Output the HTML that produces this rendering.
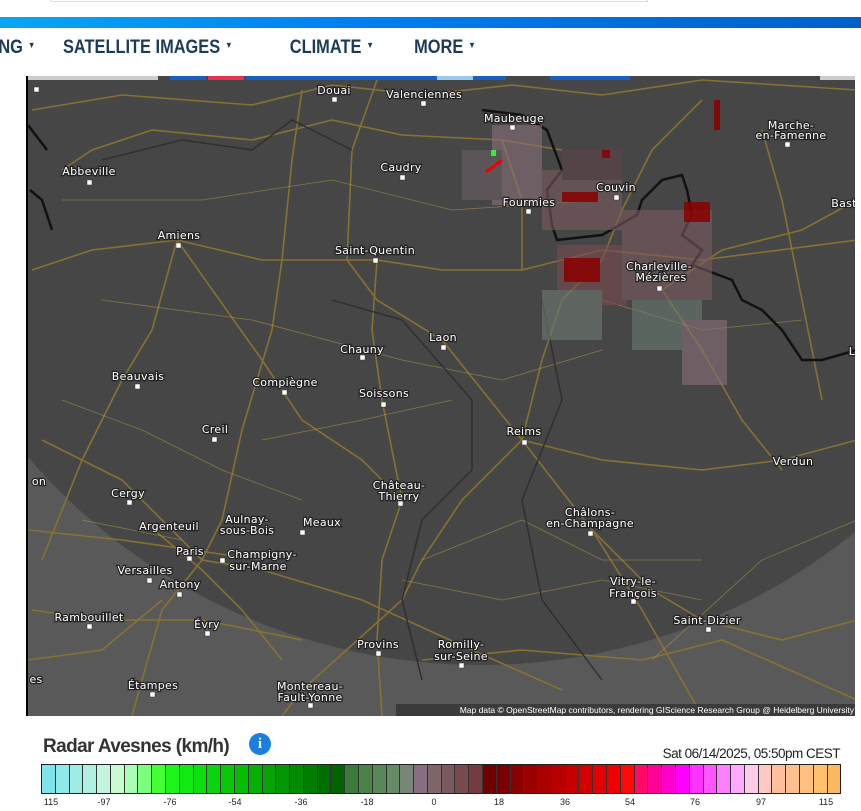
<!DOCTYPE html>
<html><head><meta charset="utf-8"><style>
*{margin:0;padding:0;box-sizing:border-box}
body{width:861px;height:811px;background:#fff;overflow:hidden;position:relative;font-family:"Liberation Sans",sans-serif}
.search{position:absolute;left:50px;top:-2px;width:598px;height:4px;border:1px solid #ddd;border-top:none}
.bar{position:absolute;left:0;top:17px;width:861px;height:11px;background:linear-gradient(90deg,#0aa6f2,#0080f0 40%,#0060c8)}
.nav{position:absolute;top:36px;left:0;height:24px;font-weight:bold;font-size:19.5px;color:#1c3a5a;white-space:nowrap;transform:scaleX(0.84);transform-origin:0 0}
.nav span{position:absolute;top:0}
.nav i{font-style:normal;font-size:9px;vertical-align:5px;margin-left:6px}
.map{position:absolute;left:26px;top:76px;width:829px;height:640px;background:#454545;overflow:hidden;border-left:2px solid #000}
.title{position:absolute;left:43px;top:736px;font-size:19px;font-weight:bold;color:#333;letter-spacing:-0.6px}
.info{position:absolute;left:249px;top:733px;width:22px;height:22px;border-radius:50%;background:#1a7fe0;color:#fff;font:bold 15px "Liberation Serif",serif;text-align:center;line-height:22px}
.date{position:absolute;right:21px;top:746px;font-size:13.5px;color:#222;letter-spacing:-0.5px}
.legend{position:absolute;left:41px;top:764px;width:800px;height:30px;border:1px solid #222;display:flex}
.legend div{flex:1;border-right:1px solid #333}
.lab{position:absolute;top:797px;font-size:9px;color:#222;transform:translateX(-50%)}
</style></head><body>
<div class="search"></div>
<div class="bar"></div>
<div class="nav">
<span style="left:-2px">NG<i>▼</i></span>
<span style="left:75px">SATELLITE IMAGES<i>▼</i></span>
<span style="left:345px">CLIMATE<i>▼</i></span>
<span style="left:493px">MORE<i>▼</i></span>
</div>
<div class="map">
<svg width="829" height="640" viewBox="26 76 829 640" xmlns="http://www.w3.org/2000/svg" font-family="DejaVu Sans, sans-serif" font-size="11">
<rect x="26" y="76" width="829" height="640" fill="#595959"/>
<circle cx="478" cy="70" r="595" fill="#464646"/>
<g fill="none" stroke="#8a7430" stroke-width="1.6" opacity="0.95">
<path d="M30 110 L120 95 L250 105 L330 85 L420 95 L510 85 L600 95 L700 80 L855 90"/>
<path d="M60 170 L90 150 L150 130 L250 140 L330 120 L400 135 L500 140 L560 150"/>
<path d="M30 270 L90 250 L175 240 L260 260 L375 260 L440 270 L520 270 L600 250 L700 260 L855 240"/>
<path d="M175 240 L150 330 L120 380 L80 460 L40 560"/>
<path d="M175 240 L260 360 L300 420 L360 460 L400 500"/>
<path d="M300 90 L290 160 L280 260 L270 330 L240 430 L220 520 L200 560"/>
<path d="M375 80 L350 150 L345 260 L375 300 L440 340 L520 440 L590 530 L640 610 L700 716"/>
<path d="M375 260 L370 330 L380 400 L400 500 L380 560 L375 640 L380 716"/>
<path d="M520 440 L600 460 L700 470 L780 460 L855 440"/>
<path d="M520 440 L460 500 L420 560 L400 600 L300 690 L280 716"/>
<path d="M520 440 L540 360 L560 300 L600 260 L620 210 L650 150 L700 100"/>
<path d="M660 290 L700 350 L740 420 L780 470"/>
<path d="M200 560 L260 570 L360 600 L470 650 L560 690"/>
<path d="M30 610 L100 620 L200 620 L300 640"/>
<path d="M200 560 L160 610 L140 680 L130 716"/>
<path d="M590 530 L650 590 L700 620 L780 640 L855 620"/>
<path d="M40 440 L120 480 L200 560"/>
<path d="M500 140 L520 200 L520 270"/>
<path d="M760 130 L780 200 L800 300 L820 400"/>
<path d="M660 290 L720 250 L800 230 L855 200"/>
<path d="M26 530 L120 540 L190 550 L260 560"/><path d="M140 520 L200 570 L240 610 L280 660"/><path d="M26 660 L100 650 L160 600"/><path d="M420 660 L520 650 L640 660 L720 640 L855 700"/>
</g>
<g fill="none" stroke="#c8a848" stroke-width="0.8" opacity="0.5">
<path d="M60 200 L200 200 L330 180 L450 210 L600 200"/><path d="M100 300 L250 320 L400 360 L500 380 L600 350"/><path d="M80 520 L180 540"/><path d="M260 440 L360 420 L450 400"/><path d="M420 560 L520 520 L600 560 L700 560"/><path d="M650 660 L760 560 L855 520"/><path d="M400 580 L500 600 L600 580 L700 600"/><path d="M60 400 L140 430 L220 470 L300 500"/><path d="M600 300 L700 330 L800 320"/>
</g>
<g fill="none" stroke="#2e2e2e" stroke-width="1.4">
<path d="M100 160 L180 140 L250 150 L290 120 L350 150"/><path d="M330 300 L400 320 L470 400 L470 470 L420 520 L400 600 L420 680"/><path d="M540 300 L560 400 L520 500 L540 600 L600 680"/>
</g>
<path d="M26 125 L45 150 M28 190 L40 200 L50 230" stroke="#111" stroke-width="2.5" fill="none"/>
<path d="M480 110 L520 115 L545 130 L560 170 L545 190 L550 225 L555 240 L600 235 L635 215 L640 200 L660 180 L680 175 L685 190 L690 215 L680 235 L700 250 L690 265 L730 280 L740 300 L760 310 L780 330 L800 360 L820 360 L855 350" stroke="#111" stroke-width="2.5" fill="none"/>
<g opacity="0.6">
<rect x="490" y="125" width="50" height="80" fill="#8a7078"/>
<rect x="540" y="170" width="80" height="60" fill="#7a5a60"/>
<rect x="555" y="245" width="70" height="60" fill="#7a4a50"/>
<rect x="540" y="290" width="60" height="50" fill="#6e7870"/>
<rect x="620" y="210" width="90" height="90" fill="#7a5a60"/>
<rect x="630" y="300" width="70" height="50" fill="#6a7a70"/>
<rect x="680" y="320" width="45" height="65" fill="#8a7078"/>
<rect x="560" y="150" width="60" height="30" fill="#604448"/>
<rect x="460" y="150" width="40" height="50" fill="#6a6068"/>
</g>
<g fill="#8a0000" opacity="0.85">
<rect x="560" y="192" width="36" height="10"/><rect x="682" y="202" width="26" height="20"/><rect x="562" y="258" width="36" height="24"/><rect x="600" y="150" width="8" height="8"/><rect x="712" y="100" width="6" height="30"/>
</g>
<path d="M484 172 L500 160" stroke="#e00" stroke-width="3"/>
<rect x="489" y="150" width="5" height="6" fill="#3e3"/>
<g fill="#fff" stroke="#333" stroke-width="0.5">
<rect x="32" y="87" width="5" height="5"/><rect x="330" y="97" width="5" height="5"/><rect x="419" y="101" width="5" height="5"/><rect x="508" y="125" width="5" height="5"/><rect x="783" y="142" width="5" height="5"/><rect x="398" y="175" width="5" height="5"/><rect x="85" y="180" width="5" height="5"/><rect x="612" y="195" width="5" height="5"/><rect x="524" y="209" width="5" height="5"/><rect x="174" y="243" width="5" height="5"/><rect x="371" y="258" width="5" height="5"/><rect x="655" y="286" width="5" height="5"/><rect x="358" y="355" width="5" height="5"/><rect x="439" y="345" width="5" height="5"/><rect x="133" y="384" width="5" height="5"/><rect x="280" y="390" width="5" height="5"/><rect x="379" y="402" width="5" height="5"/><rect x="210" y="437" width="5" height="5"/><rect x="520" y="440" width="5" height="5"/><rect x="125" y="500" width="5" height="5"/><rect x="396" y="501" width="5" height="5"/><rect x="175" y="525" width="5" height="5"/><rect x="298" y="530" width="5" height="5"/><rect x="185" y="556" width="5" height="5"/><rect x="218" y="558" width="5" height="5"/><rect x="586" y="531" width="5" height="5"/><rect x="145" y="578" width="5" height="5"/><rect x="175" y="592" width="5" height="5"/><rect x="629" y="599" width="5" height="5"/><rect x="85" y="624" width="5" height="5"/><rect x="704" y="627" width="5" height="5"/><rect x="203" y="631" width="5" height="5"/><rect x="374" y="651" width="5" height="5"/><rect x="457" y="663" width="5" height="5"/><rect x="148" y="692" width="5" height="5"/><rect x="306" y="703" width="5" height="5"/>
</g>
<g fill="#fff" stroke="#222" stroke-width="2.5" paint-order="stroke" text-anchor="middle" letter-spacing="0.3">
<text x="332" y="94">Douai</text><text x="422" y="98">Valenciennes</text><text x="512" y="122">Maubeuge</text><text x="789" y="129">Marche-</text><text x="789" y="139">en-Famenne</text><text x="399" y="171">Caudry</text><text x="87" y="175">Abbeville</text><text x="614" y="191">Couvin</text><text x="527" y="206">Fourmies</text><text x="842" y="207">Bast</text><text x="177" y="239">Amiens</text><text x="373" y="254">Saint-Quentin</text><text x="657" y="270">Charleville-</text><text x="659" y="281">Mézières</text><text x="360" y="353">Chauny</text><text x="441" y="341">Laon</text><text x="136" y="380">Beauvais</text><text x="283" y="386">Compiègne</text><text x="382" y="397">Soissons</text><text x="213" y="433">Creil</text><text x="522" y="435">Reims</text><text x="791" y="465">Verdun</text><text x="397" y="489">Château-</text><text x="397" y="500">Thierry</text><text x="126" y="497">Cergy</text><text x="588" y="516">Châlons-</text><text x="588" y="527">en-Champagne</text><text x="167" y="530">Argenteuil</text><text x="245" y="523">Aulnay-</text><text x="245" y="534">sous-Bois</text><text x="320" y="526">Meaux</text><text x="188" y="555">Paris</text><text x="260" y="558">Champigny-</text><text x="256" y="570">sur-Marne</text><text x="143" y="574">Versailles</text><text x="178" y="588">Antony</text><text x="631" y="585">Vitry-le-</text><text x="631" y="597">François</text><text x="87" y="621">Rambouillet</text><text x="705" y="624">Saint-Dizier</text><text x="205" y="628">Évry</text><text x="376" y="648">Provins</text><text x="459" y="648">Romilly-</text><text x="459" y="660">sur-Seine</text><text x="151" y="689">Étampes</text><text x="308" y="690">Montereau-</text><text x="308" y="701">Fault-Yonne</text><text x="37" y="485">on</text><text x="34" y="683">es</text><text x="850" y="355">L</text>
</g>
<rect x="26" y="76" width="130" height="4" fill="#ccc"/><rect x="168" y="76" width="36" height="4" fill="#1a60c0"/><rect x="206" y="76" width="36" height="4" fill="#e83050"/><rect x="244" y="76" width="260" height="4" fill="#1a60c0"/><rect x="435" y="76" width="36" height="4" fill="#9cc8f0"/><rect x="548" y="76" width="80" height="4" fill="#1a60c0"/><rect x="818" y="76" width="37" height="4" fill="#ccc"/>
<rect x="394" y="704" width="461" height="12" fill="#333" opacity="0.8"/>
<text x="852" y="713" fill="#fff" font-size="8.5" font-family="Liberation Sans, sans-serif" text-anchor="end">Map data © OpenStreetMap contributors, rendering GIScience Research Group @ Heidelberg University</text>
</svg>
</div>
<div class="title">Radar Avesnes (km/h)</div>
<div class="info">i</div>
<div class="date">Sat 06/14/2025, 05:50pm CEST</div>
<div class="legend">
<div style="background:#7fe3ec"></div><div style="background:#8fe8ea"></div><div style="background:#9eece5"></div><div style="background:#aff0e0"></div><div style="background:#c4f5dc"></div><div style="background:#c8fcd0"></div><div style="background:#a8ffb4"></div><div style="background:#7dff7d"></div><div style="background:#44ff33"></div><div style="background:#1cf51c"></div><div style="background:#12e812"></div><div style="background:#0ede0e"></div><div style="background:#0ad40a"></div><div style="background:#08c808"></div><div style="background:#06bd06"></div><div style="background:#05b005"></div><div style="background:#04a404"></div><div style="background:#039603"></div><div style="background:#028a02"></div><div style="background:#027c02"></div><div style="background:#016e01"></div><div style="background:#016401"></div><div style="background:#3a7a3a"></div><div style="background:#4a824a"></div><div style="background:#588858"></div><div style="background:#678a67"></div><div style="background:#768776"></div><div style="background:#886f80"></div><div style="background:#7f6468"></div><div style="background:#7a5a5e"></div><div style="background:#784a4e"></div><div style="background:#743b40"></div><div style="background:#6e0000"></div><div style="background:#7a0000"></div><div style="background:#8a0000"></div><div style="background:#9a0000"></div><div style="background:#aa0000"></div><div style="background:#b80000"></div><div style="background:#c60000"></div><div style="background:#d40000"></div><div style="background:#e20000"></div><div style="background:#f00000"></div><div style="background:#ff0a0a"></div><div style="background:#ff0a66"></div><div style="background:#ff0099"></div><div style="background:#ff00cc"></div><div style="background:#ff00ff"></div><div style="background:#ff33ff"></div><div style="background:#ff55ff"></div><div style="background:#ff80ff"></div><div style="background:#ffaaff"></div><div style="background:#ffcce8"></div><div style="background:#ffc8c0"></div><div style="background:#ffc0a0"></div><div style="background:#ffc090"></div><div style="background:#ffc080"></div><div style="background:#ffc070"></div><div style="background:#fcb860;border-right:none"></div>
</div>
<div class="lab" style="left:51px">115</div><div class="lab" style="left:104px">-97</div><div class="lab" style="left:170px">-76</div><div class="lab" style="left:235px">-54</div><div class="lab" style="left:301px">-36</div><div class="lab" style="left:367px">-18</div><div class="lab" style="left:434px">0</div><div class="lab" style="left:499px">18</div><div class="lab" style="left:565px">36</div><div class="lab" style="left:630px">54</div><div class="lab" style="left:695px">76</div><div class="lab" style="left:761px">97</div><div class="lab" style="left:826px">115</div>
</body></html>
